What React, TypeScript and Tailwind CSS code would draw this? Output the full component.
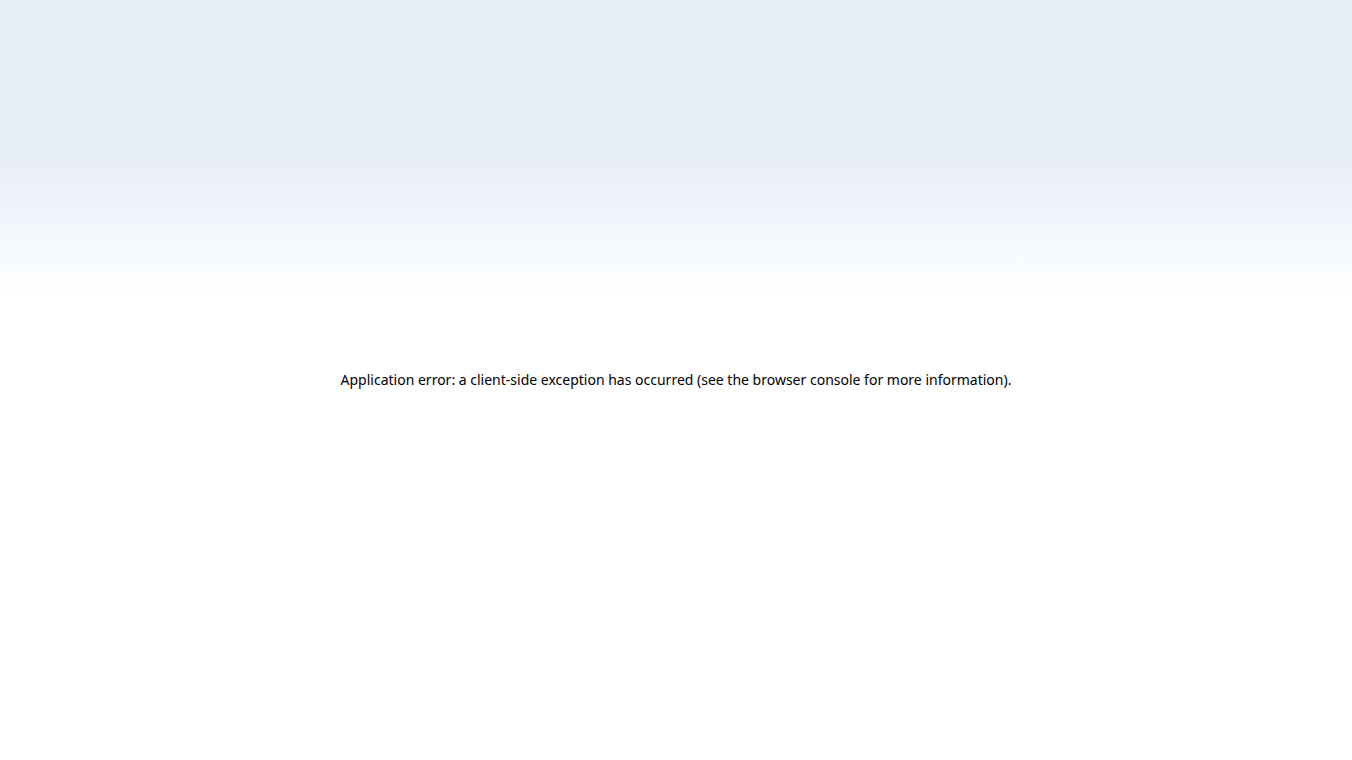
export default function App() {
  return (
    <div className="flex h-screen w-full flex-col items-center justify-center bg-[linear-gradient(to_bottom,#e8eef6_0px,#e8eef6_160px,#eef3fc_205px,#f6fafd_250px,#ffffff_298px)] font-['Noto_Sans',sans-serif] text-black">
      <h2 className="text-[14px] font-normal leading-[28px]">
        Application error: a client-side exception has occurred (see the browser console for more information).
      </h2>
    </div>
  );
}
